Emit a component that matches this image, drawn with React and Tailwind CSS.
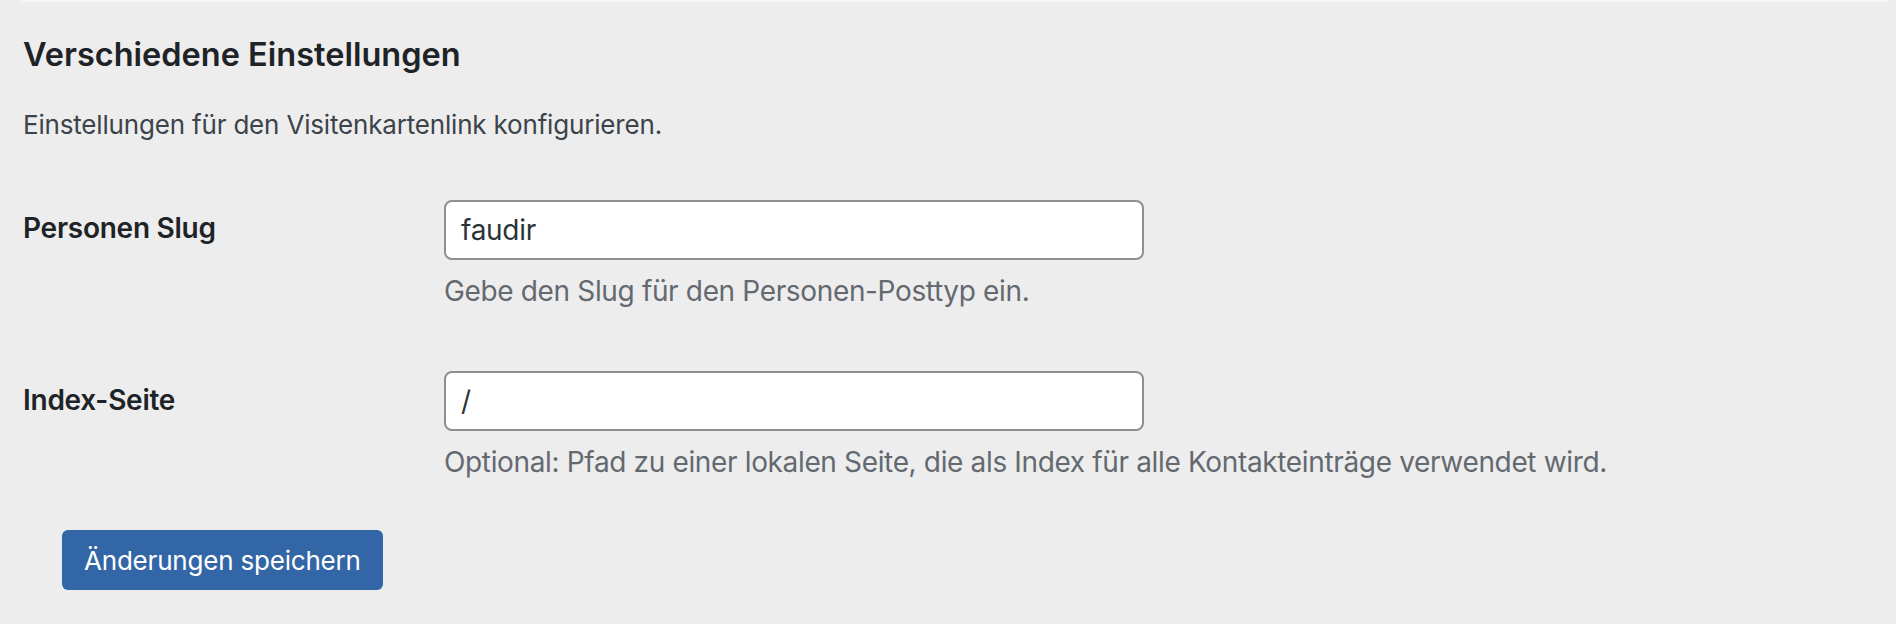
export default function App() {
  return (
    <div className="min-h-screen w-full bg-[#ededed] font-['Inter','Liberation_Sans',sans-serif]">
      {/* bottom edge of the box above */}
      <div className="ml-[22px] mr-[8px] h-[2px] bg-[#f6f6f6]" />

      <div className="pl-[23px]">
        <h2 className="mt-[31px] text-[32.5px] leading-[44px] font-semibold text-[#1d2327]">
          Verschiedene Einstellungen
        </h2>
        <p className="mt-[28px] text-[26px] leading-[40px] tracking-[-0.18px] text-[#3c434a]">
          Einstellungen für den Visitenkartenlink konfigurieren.
        </p>

        {/* Personen Slug */}
        <div className="mt-[55px] flex">
          <label className="w-[421px] shrink-0 pt-[10px] text-[28px] leading-[36px] font-semibold tracking-[-0.25px] text-[#1d2327]">
            Personen Slug
          </label>
          <div>
            <input
              type="text"
              defaultValue="faudir"
              className="block h-[60px] w-[700px] rounded-[8px] border-2 border-[#8c8f94] bg-white px-[15px] text-[28px] tracking-[-0.3px] text-[#2c3338] outline-none"
            />
            <p className="mt-[10px] text-[28px] leading-[42px] tracking-[-0.35px] text-[#646970]">
              Gebe den Slug für den Personen-Posttyp ein.
            </p>
          </div>
        </div>

        {/* Index-Seite */}
        <div className="mt-[59px] flex">
          <label className="w-[421px] shrink-0 pt-[11px] text-[28px] leading-[36px] font-semibold tracking-[-0.25px] text-[#1d2327]">
            Index-Seite
          </label>
          <div>
            <input
              type="text"
              defaultValue="/"
              className="block h-[60px] w-[700px] rounded-[8px] border-2 border-[#8c8f94] bg-white px-[15px] text-[28px] text-[#2c3338] outline-none"
            />
            <p className="mt-[10px] text-[28px] leading-[42px] tracking-[-0.35px] text-[#646970]">
              Optional: Pfad zu einer lokalen Seite, die als Index für alle Kontakteinträge verwendet wird.
            </p>
          </div>
        </div>

        <button className="mt-[47px] ml-[39px] h-[60px] rounded-[6px] bg-[#3366a6] px-[22px] text-[26px] tracking-[-0.2px] text-white">
          Änderungen speichern
        </button>
      </div>
    </div>
  );
}
